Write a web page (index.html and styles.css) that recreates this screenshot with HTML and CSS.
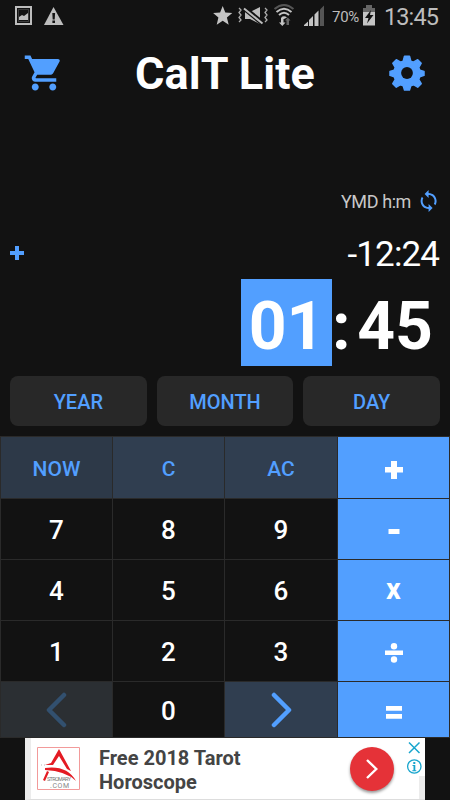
FILE: index.html
```html
<!DOCTYPE html>
<html lang="en">

<head>
    <meta charset="UTF-8">
    <title>CalT Lite</title>
    <link rel="stylesheet" href="styles.css">
</head>

<body>
    <div class="statusbar">
        <svg class="status-left" width="50" height="32" viewBox="0 0 50 32">
            <path fill="#bdbdbd" fill-rule="evenodd" d="M0 6h17v19H0zM2 8v15h13V8z" />
            <path fill="none" stroke="#bdbdbd" d="M3.500 9.500h10v12h-10z" opacity=".25" />
            <path fill="#bdbdbd" d="M4 20v-3l3-2 2 1 4-3v7z" />
            <path fill="#bdbdbd" d="M38.500 7L48.500 25H29z" />
            <path fill="#121212" d="M37.300 13h2.800l-.4 6.500h-2zM37.400 20.500h2.600v2.500h-2.600z" />
        </svg>
        <svg class="status-right" width="114" height="32" viewBox="212 0 114 32">
            <path fill="#c4c4c4" d="M222.700 6l2.600 6.600 7 .5-5.400 4.500 1.800 7.200-6-4-6 4 1.700-7.200-5.300-4.500 7-.5z" />
            <path fill="#bdbdbd" d="M245 12h5l10-5v17l-10-5h-5z" />
            <path stroke="#121212" stroke-width="5" d="M244 8l19 15.500" />
            <path stroke="#bdbdbd" stroke-width="2" d="M244 8.500l18.500 15" />
            <path fill="none" stroke="#aaa" stroke-width="1.300" d="M239 8l2 2-2 2.500 2 2.500-2 2.500 2 2.500-2 2M265 8l2 2-2 2.500 2 2.500-2 2.500 2 2.500-2 2" />
            <path fill="none" stroke="#555" stroke-width="2" d="M274.500 9q9.500-8 19 0" />
            <path fill="none" stroke="#c4c4c4" stroke-width="2" d="M276.500 12q7.500-6.500 15 0M279 15q5-4.500 10 0" />
            <path fill="#c4c4c4" d="M281 17.500q3-2.500 6 0l-3 1.500zM281 18h2.500v4.500h2l-3.200 3.500-3.300-3.500h2z" />
            <path fill="#666" d="M286.500 25h2.500v-4.500h1.500l-2.700-3-2.700 3h1.400z" />
            <path fill="#c4c4c4" d="M304 26v-1l4-3.500V26zM309 26v-6l4-4v10zM314.500 26V14.500l4-4V26z" />
            <path fill="#555" d="M320 26V9.500l4-4V26z" />
        </svg>
        <span class="percent">70%</span>
        <svg class="battery" width="14" height="22" viewBox="0 0 14 22">
            <path fill="#666" d="M4 0h6v3h3v4H1V3h3z" />
            <path fill="#c4c4c4" d="M1 7h12v13.500H1z" />
            <path fill="#121212" d="M9 5L3 13h3.500L5 18.500 11.500 10H8z" />
        </svg>
        <span class="clock">13:45</span>
    </div>

    <header>
        <svg class="cart" width="42" height="42" viewBox="0 0 24 24">
            <path fill="#529fff" d="M7 18c-1.100 0-1.990.9-1.990 2S5.900 22 7 22s2-.9 2-2-.9-2-2-2zM1 2v2h2l3.600 7.590-1.350 2.450c-.16.28-.25.61-.25.96 0 1.100.9 2 2 2h12v-2H7.420c-.14 0-.25-.11-.25-.25l.03-.12.9-1.630h7.450c.75 0 1.410-.41 1.750-1.030l3.580-6.490c.08-.14.12-.31.12-.48 0-.55-.45-1-1-1H5.210l-.94-2H1zm16 16c-1.100 0-1.990.9-1.990 2s.89 2 1.990 2 2-.9 2-2-.9-2-2-2z" />
        </svg>
        <h1>CalT Lite</h1>
        <svg class="gear" width="36" height="36" viewBox="-18 -18 36 36">
            <path fill="#529fff" stroke="#529fff" stroke-linejoin="round" stroke-width="1.500" d="M-2.500-16.700h5l1.300 4.800 2.600 1.100 4.300-2.500 3.500 3.500-2.500 4.300 1.100 2.600 4.200 1.300v4l-4.200 1.400-1.100 2.600 2.500 4.300-3.500 3.500-4.300-2.500-2.600 1.100-1.300 4.200h-5l-1.300-4.200-2.600-1.100-4.300 2.500-3.500-3.500 2.500-4.300-1.100-2.600-4.200-1.400v-4l4.200-1.300 1.100-2.600-2.500-4.300 3.500-3.500 4.300 2.500 2.600-1.100z" />
            <circle r="5.900" fill="#121212" />
        </svg>
    </header>

    <section class="display">
        <div class="format">
            <span>YMD h:m</span>
            <svg width="24" height="24" viewBox="-.6 0 24 24">
                <path fill="#529fff" d="M12 4V1L8 5l4 4V6c3.310 0 6 2.690 6 6 0 1.010-.25 1.970-.7 2.800l1.460 1.460C19.540 15.030 20 13.570 20 12c0-4.420-3.580-8-8-8zm0 14c-3.310 0-6-2.690-6-6 0-1.010.25-1.970.7-2.800L5.240 7.740C4.460 8.970 4 10.430 4 12c0 4.420 3.580 8 8 8v3l4-4-4-4v3z" />
            </svg>
        </div>
        <div class="operand">
            <svg width="14" height="16" viewBox="0 0 14 16">
                <path fill="#529fff" d="M5 1h4v5h5v4H9v5H5v-5H0V6h5z" />
            </svg>
            <span>-12:24</span>
        </div>
        <div class="result">
            <span class="selected">01</span>
            <span class="colon">:</span>
            <span class="minutes">45</span>
        </div>
    </section>

    <nav>
        <button>YEAR</button>
        <button>MONTH</button>
        <button>DAY</button>
    </nav>

    <section class="keypad">
        <button class="func now">NOW</button>
        <button class="func">C</button>
        <button class="func">AC</button>
        <button class="op">
            <svg width="18" height="18" viewBox="0 0 18 18"><path fill="#fff" d="M6 0h6v6h6v5.500h-6V18H6v-6.500H0V6h6z" /></svg>
        </button>
        <button>7</button>
        <button>8</button>
        <button>9</button>
        <button class="op minus">
            <svg width="12" height="6" viewBox="0 0 12 6"><path fill="#fff" d="M.5 0h11v5H.5z" /></svg>
        </button>
        <button>4</button>
        <button>5</button>
        <button>6</button>
        <button class="op times">x</button>
        <button>1</button>
        <button>2</button>
        <button>3</button>
        <button class="op">
            <svg width="18" height="20" viewBox="0 0 18 20"><path fill="#fff" d="M0 7.500h18v4.500H0z" /><circle cx="9" cy="3.300" r="3.200" fill="#fff" /><circle cx="9" cy="16.500" r="3.200" fill="#fff" /></svg>
        </button>
        <button class="func prev">
            <svg width="22" height="36" viewBox="0 0 22 36"><path fill="none" stroke="#32506f" stroke-width="4.500" stroke-linecap="round" stroke-linejoin="round" d="M18 3L3 18l15 15" /></svg>
        </button>
        <button>0</button>
        <button class="func next">
            <svg width="22" height="36" viewBox="0 0 22 36"><path fill="none" stroke="#529fff" stroke-width="4.500" stroke-linecap="round" stroke-linejoin="round" d="M4 3l15 15L4 33" /></svg>
        </button>
        <button class="op equals">
            <svg width="16" height="14" viewBox="0 0 16 14"><path fill="#fff" d="M0 0h16v4.700H0zM0 8h16v4.700H0z" /></svg>
        </button>
    </section>

    <footer>
        <div class="ad-logo">
            <svg width="43" height="43" viewBox="0 0 43 43">
                <path fill="#fff" stroke="#f29a9a" d="M.5.5h42v42H.500z" />
                <path fill="#e41b23" d="M22 2L34 24l-4-2-8-13-6 9H8l6-2z" />
                <path fill="#e41b23" d="M8 21q22-3 31 13-10-10-31-11zM10 24l2 1-4 9-2-1z" />
                <path fill="none" stroke="#bbb" stroke-dasharray="1 2" d="M4 18h6" />
                <text class="logo-name" x="10" y="34" textLength="24">STROMARY</text>
                <text class="logo-com" x="13" y="41" textLength="19">.COM</text>
            </svg>
        </div>
        <p class="ad-text">Free 2018 Tarot<br>Horoscope</p>
        <div class="ad-go">
            <svg width="12" height="20" viewBox="0 0 12 20"><path fill="none" stroke="#fff" stroke-width="2.400" d="M1 1l9.300 9L1 19" /></svg>
        </div>
        <div class="ad-info">
            <svg width="16" height="38" viewBox="0 0 16 38">
                <path stroke="#17a5cd" stroke-width="1.500" d="M3 4.500l10.500 10.500M13.500 4.500L3 15" />
                <circle cx="8.300" cy="28.500" r="6.700" fill="none" stroke="#17a5cd" stroke-width="1.300" />
                <path fill="#17a5cd" d="M7.300 24h2v2h-2zM6.500 27h2.800v5.200h1v1h-4v-1h1.200v-4.200h-1z" />
            </svg>
            <div class="ad-edge"></div>
        </div>
    </footer>
</body>

</html>
```

FILE: styles.css
```css
* {
    margin: 0;
    padding: 0;
    box-sizing: border-box;
}

body {
    width: 450px;
    height: 800px;
    overflow: hidden;
    background: #121212;
    color: #fff;
    font-family: Roboto, "Liberation Sans", sans-serif;
}

svg {
    display: block;
}

button {
    border: none;
    font-family: inherit;
    cursor: pointer;
}

.statusbar {
    display: flex;
    align-items: center;
    height: 32px;
    color: #bdbdbd;
    white-space: nowrap;
}

.status-left {
    margin-left: 15px;
}

.status-right {
    margin-left: 147px;
}

.percent {
    width: 30px;
    margin-left: 6px;
    padding-top: 2px;
    font-size: 15px;
    letter-spacing: -.3px;
}

.clock {
    margin-left: 8px;
    padding-top: 2px;
    font-size: 23.5px;
    letter-spacing: -.9px;
}

header {
    display: flex;
    justify-content: space-between;
    align-items: center;
    height: 82px;
    padding: 0 25px 0 23px;
}

h1 {
    padding: 2px 4px 0 0;
    font-size: 45px;
    font-weight: bold;
    line-height: 80px;
    letter-spacing: .1px;
}

/*---- display ----*/
.display {
    padding: 75px 10px 0;
}

.format {
    display: flex;
    justify-content: flex-end;
    align-items: center;
    gap: 5px;
    height: 24px;
    color: #c8c8c8;
    font-size: 18px;
    letter-spacing: -.4px;
}

.operand {
    display: flex;
    justify-content: space-between;
    align-items: center;
    height: 66px;
    margin-top: 7px;
    font-size: 35px;
    letter-spacing: -.9px;
}

.operand span {
    padding: 2px 1px 0 0;
}

.result {
    display: flex;
    justify-content: flex-end;
    height: 87px;
    margin-top: -7px;
    font-size: 66px;
    font-weight: bold;
    line-height: 95px;
    text-align: center;
}

.selected {
    width: 91px;
    background: #529fff;
}

.colon {
    width: 18px;
}

.minutes {
    width: 90px;
}

nav {
    display: grid;
    grid-template-columns: repeat(3, 1fr);
    gap: 10px;
    height: 50px;
    margin: 10px;
}

nav button {
    padding-top: 2px;
    border-radius: 8px;
    background: #282828;
    color: #529fff;
    font-size: 20px;
    font-weight: 500;
}

/*---- keypad ----*/
.keypad {
    display: grid;
    grid-template-columns: 111px 111px 112px 111px;
    grid-template-rows: 61px 60px 60px 60px 55px;
    gap: 1px;
    height: 302px;
    padding: 1px;
    background: #2a2a2a;
}

.keypad button {
    display: flex;
    justify-content: center;
    align-items: center;
    padding-top: 2px;
    background: #121212;
    color: #fff;
    font-size: 26px;
    font-weight: 500;
}

.keypad .func {
    background: #303e50;
    color: #529fff;
    font-size: 21px;
}

.keypad .now {
    background: #2d3948;
}

.keypad .prev {
    padding-top: 0;
    background: #2b2f33;
}

.keypad .next {
    padding-top: 0;
}

.keypad .op {
    padding-top: 4px;
    background: #529fff;
    font-weight: bold;
}

.keypad .minus {
    padding-top: 6px;
}

.keypad .times {
    padding: 0 0 3px;
    font-size: 29px;
}

.keypad .equals {
    padding-top: 6px;
}

/*---- ad banner ----*/
footer {
    display: flex;
    width: 400px;
    height: 62px;
    margin: 0 auto;
    border-left: 6px solid #ececec;
    border-bottom: 1px solid #ddd;
    background: #fff;
}

.ad-logo {
    margin: 9px 19px 0 6px;
}

.logo-name {
    fill: #777;
    font-size: 5.5px;
}

.logo-com {
    fill: #888;
    font-size: 7px;
}

.ad-text {
    width: 251px;
    padding-top: 8px;
    color: #444;
    font-size: 20px;
    font-weight: bold;
    line-height: 24px;
}

.ad-go {
    display: flex;
    flex-shrink: 0;
    justify-content: center;
    align-items: center;
    width: 44px;
    height: 44px;
    margin-top: 9px;
    border-radius: 50%;
    background: #e53238;
    box-shadow: 0 2px 3px rgba(0, 0, 0, .4);
}

.ad-info {
    width: 19px;
    margin-left: 12px;
}

.ad-edge {
    width: 6px;
    height: 23px;
    margin-left: auto;
    background: #ececec;
}
```
